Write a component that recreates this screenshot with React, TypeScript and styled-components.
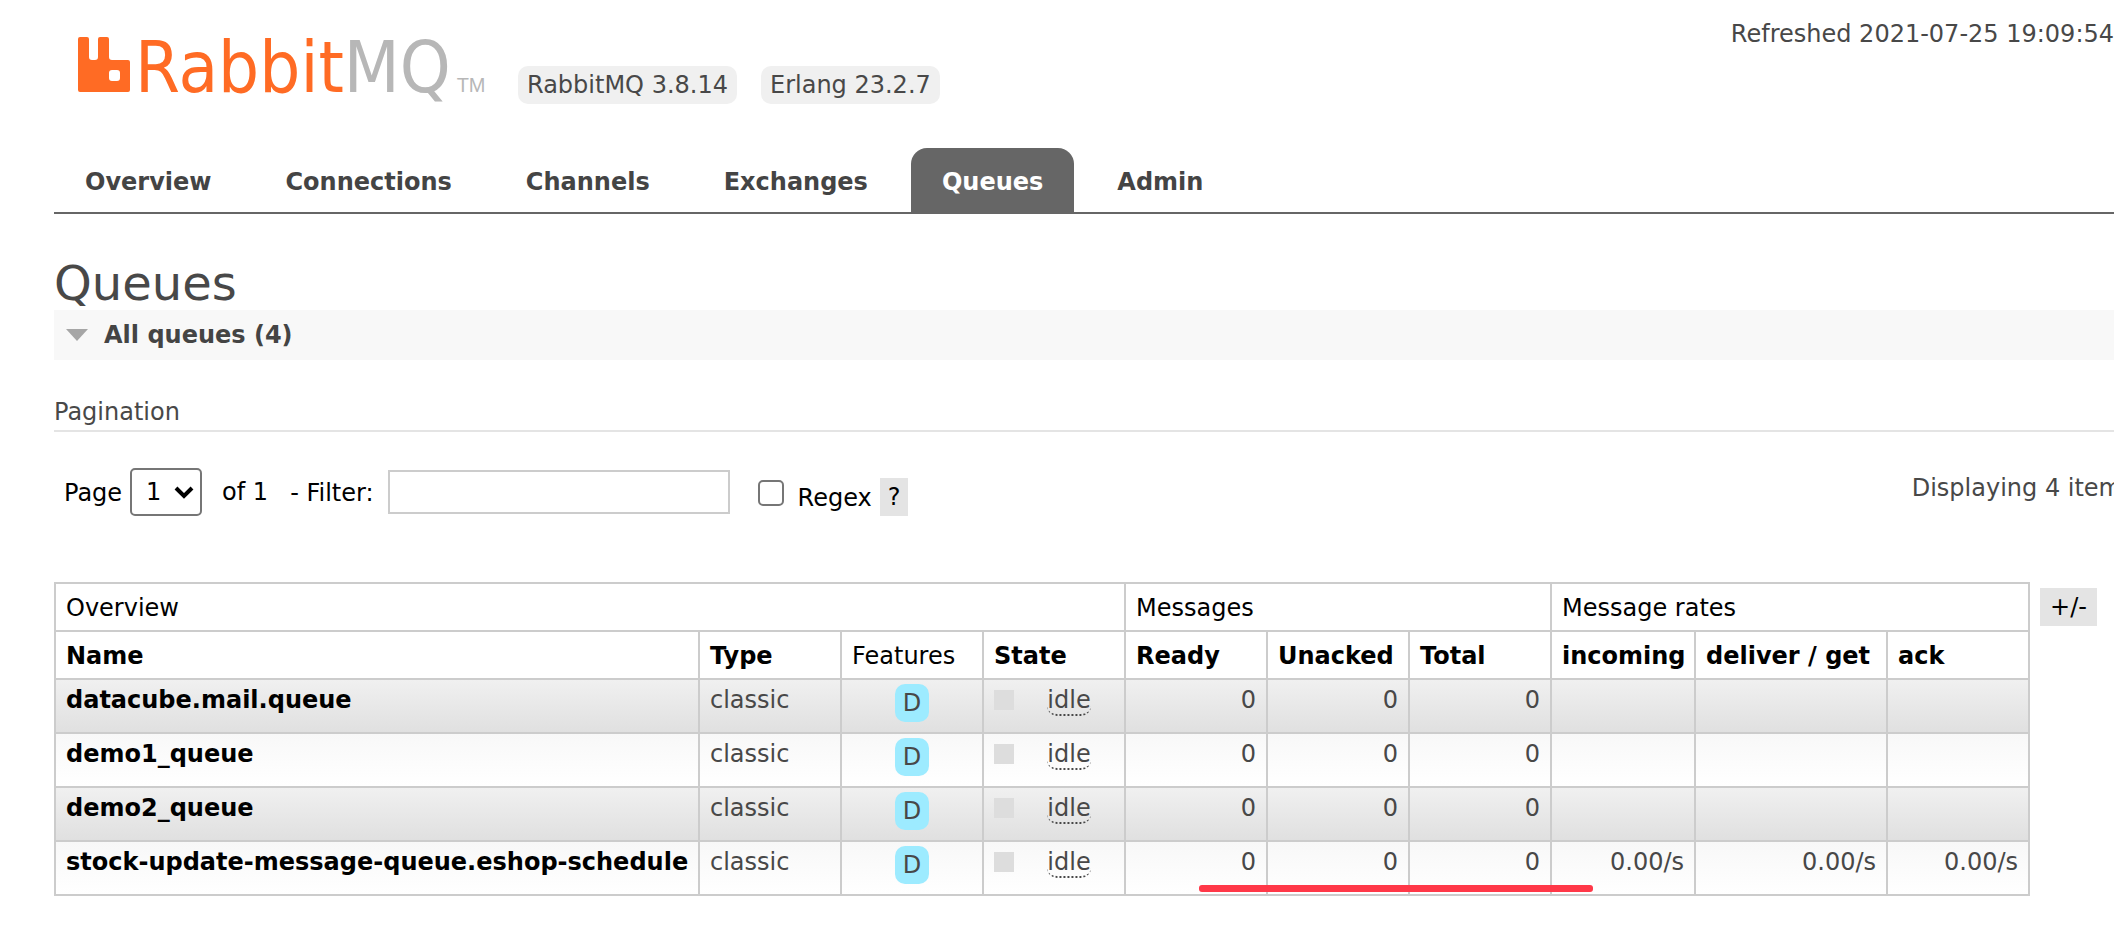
import React from "react";
import styled, { createGlobalStyle } from "styled-components";

const GlobalStyle = createGlobalStyle`
  * { box-sizing: border-box; }
  body {
    margin: 0;
    background: #fff;
    color: #484848;
    font-family: Verdana, "DejaVu Sans", sans-serif;
    font-size: 24px;
    line-height: 28px;
    overflow-x: hidden;
  }
  button, input, select { font: inherit; color: #000; }
`;

const Header = styled.header`
  display: flex;
  align-items: flex-start;
  min-height: 148px;
  padding-left: 78px;
`;

const LogoLink = styled.a`
  display: flex;
  align-items: flex-start;
  width: 440px;
  padding-top: 37px;
  text-decoration: none;
`;

const LogoMark = styled.svg`
  flex: none;
`;

const LogoText = styled.span`
  margin-left: 4px;
  font-family: "DejaVu Sans Condensed", "DejaVu Sans", sans-serif;
  font-size: 72px;
  line-height: 60px;
  color: #ff6b24;
  white-space: nowrap;
`;

const LogoGrey = styled.span`
  color: #b7b7b7;
`;

const Trademark = styled.span`
  margin-left: 6px;
  font-family: "Liberation Sans", sans-serif;
  font-size: 20px;
  color: #b7b7b7;
`;

const Versions = styled.div`
  display: flex;
  gap: 24px;
  padding-top: 66px;
`;

const Version = styled.span`
  padding: 5px 9px;
  border-radius: 10px;
  background: #f0f0f0;
  white-space: nowrap;
`;

const Refreshed = styled.div`
  margin-left: auto;
  padding-top: 20px;
  white-space: nowrap;
`;

const Main = styled.main`
  padding-left: 54px;
`;

const Tabs = styled.nav`
  display: flex;
  gap: 12px;
  margin-left: 54px;
  border-bottom: 2px solid #666;
`;

const Tab = styled.a<{ $active?: boolean }>`
  padding: 20px 31px 16px;
  border-radius: 16px 16px 0 0;
  background: ${(p) => (p.$active ? "#666" : "transparent")};
  color: ${(p) => (p.$active ? "#fff" : "#444")};
  font-weight: bold;
  text-decoration: none;
`;

const Title = styled.h1`
  margin: 42px 0 0;
  font-size: 48px;
  font-weight: normal;
  line-height: 54px;
`;

const SectionToggle = styled.button`
  display: flex;
  align-items: center;
  gap: 16px;
  width: 100%;
  height: 50px;
  padding: 0 12px;
  border: 0;
  background: #f8f8f8;
  color: #444;
  font-weight: bold;
`;

const SubHeading = styled.h3`
  margin: 38px 0 36px;
  padding-bottom: 4px;
  border-bottom: 2px solid #e4e4e4;
  font-size: 24px;
  font-weight: normal;
`;

const FilterBar = styled.form`
  display: flex;
  align-items: flex-start;
  height: 114px;
  padding-left: 10px;
  color: #000;
`;

const Field = styled.div`
  display: flex;
  align-items: center;
  height: 48px;
`;

const FieldLabel = styled.label`
  padding-top: 2px;
`;

const SelectBox = styled.div`
  position: relative;
  margin: 0 20px 0 8px;
`;

const PageSelect = styled.select`
  appearance: none;
  display: block;
  width: 72px;
  height: 48px;
  padding: 0 0 0 14px;
  border: 2px solid #767676;
  border-radius: 5px;
  background: #fff;
`;

const Chevron = styled.svg`
  position: absolute;
  right: 8px;
  top: 18px;
  pointer-events: none;
`;

const FilterLabel = styled(FieldLabel)`
  margin: 0 14px 0 22px;
`;

const FilterInput = styled.input`
  width: 342px;
  height: 44px;
  padding: 4px;
  border: 2px solid #ccc;
  background: #fff;
`;

const RegexField = styled.div`
  display: flex;
  align-items: flex-end;
  height: 48px;
  margin-left: 28px;
`;

const Checkbox = styled.input`
  appearance: none;
  width: 26px;
  height: 26px;
  margin: 0 14px 10px 0;
  border: 2px solid #767676;
  border-radius: 5px;
  background: #fff;
`;

const RegexLabel = styled.label`
  margin: 0 8px 4px 0;
`;

const GreyButton = styled.button`
  height: 38px;
  padding: 0 8px;
  border: 0;
  background: #e4e4e4;
  white-space: nowrap;
`;

const Displaying = styled.div`
  margin: 0 -8px 0 auto;
  padding-top: 6px;
  color: #484848;
  white-space: nowrap;
`;

const TableArea = styled.div`
  position: relative;
  display: flex;
  align-items: flex-start;
  gap: 10px;
  padding-bottom: 30px;
`;

const ColumnsButton = styled(GreyButton)`
  margin-top: 6px;
  padding: 0 10px;
`;

const QueueTable = styled.table`
  flex: none;
  width: 1976px;
  border-collapse: collapse;
  table-layout: fixed;
`;

const Col = styled.col<{ $w: number }>`
  width: ${(p) => p.$w}px;
`;

const HeadCell = styled.th<{ $plain?: boolean }>`
  padding: 10px 10px 8px;
  border: 2px solid #ccc;
  background: #fff;
  color: #000;
  font-weight: ${(p) => (p.$plain ? "normal" : "bold")};
  text-align: left;
  white-space: nowrap;
`;

const Row = styled.tr`
  &:nth-child(odd) td { background: linear-gradient(#f0f0f0, #e0e0e0); }
  &:nth-child(even) td { background: linear-gradient(#f8f8f8, #fff); }
`;

const Cell = styled.td<{ $align?: "left" | "center" | "right" }>`
  height: 54px;
  padding: 6px 10px 0;
  border: 2px solid #ccc;
  text-align: ${(p) => p.$align ?? "left"};
  vertical-align: top;
  white-space: nowrap;
`;

const FeatureCell = styled(Cell)`
  padding-top: 4px;
`;

const QueueLink = styled.a`
  color: #000;
  font-weight: bold;
  text-decoration: none;
`;

const Feature = styled.span`
  display: inline-block;
  padding: 5px 8px;
  border-radius: 10px;
  background: #9debff;
  vertical-align: top;
`;

const StateBox = styled.div`
  display: flex;
  gap: 10px;
`;

const StateKey = styled.span`
  width: 20px;
  height: 20px;
  margin-top: 4px;
  background: #ddd;
`;

const StateText = styled.span`
  flex: 1;
  text-align: center;
`;

const Abbr = styled.abbr`
  display: inline-block;
  border-bottom: 2px dotted #484848;
  border-radius: 10px;
  text-decoration: none;
`;

const RedLine = styled.div`
  position: absolute;
  left: 1145px;
  top: 303px;
  width: 394px;
  height: 7px;
  border-radius: 3px;
  background: #ff3848;
`;

const tabs = ["Overview", "Connections", "Channels", "Exchanges", "Queues", "Admin"];
const columns = [644, 142, 142, 142, 142, 142, 142, 144, 192, 142];
const heads = ["Name", "Type", "Features", "State", "Ready", "Unacked", "Total", "incoming", "deliver / get", "ack"];
const queues = [
  { name: "datacube.mail.queue", rate: "" },
  { name: "demo1_queue", rate: "" },
  { name: "demo2_queue", rate: "" },
  { name: "stock-update-message-queue.eshop-schedule", rate: "0.00/s" },
];

export default function App() {
  return (
    <>
      <GlobalStyle />
      <Header>
        <LogoLink href="#" aria-label="RabbitMQ">
          <LogoMark width="53" height="56" viewBox="0 0 53 56" fill="#ff6b24">
            <path
              fillRule="evenodd"
              d="M2 0H9Q11 0 11 2V20Q11 23 14 23H17Q20 23 20 20V2Q20 0 22 0H29Q31 0 31 2V20Q31 23 34 23H50Q52 23 52 25V53Q52 55 50 55H2Q0 55 0 53V2Q0 0 2 0ZM34 33Q31 33 31 36V41Q31 44 34 44H39Q42 44 42 41V36Q42 33 39 33Z"
            />
          </LogoMark>
          <LogoText>
            Rabbit<LogoGrey>MQ</LogoGrey>
            <Trademark>TM</Trademark>
          </LogoText>
        </LogoLink>
        <Versions>
          <Version>RabbitMQ 3.8.14</Version>
          <Version>Erlang 23.2.7</Version>
        </Versions>
        <Refreshed>Refreshed 2021-07-25 19:09:54</Refreshed>
      </Header>
      <Tabs>
        {tabs.map((t) => (
          <Tab key={t} href="#" $active={t === "Queues"}>
            {t}
          </Tab>
        ))}
      </Tabs>
      <Main>
        <Title>Queues</Title>
        <SectionToggle type="button">
          <svg width="22" height="14" viewBox="0 0 22 14" fill="#a6a6a6">
            <path d="M0 1H22L11 13Z" />
          </svg>
          All queues (4)
        </SectionToggle>
        <SubHeading>Pagination</SubHeading>
        <FilterBar>
          <Field>
            <FieldLabel htmlFor="page">Page</FieldLabel>
            <SelectBox>
              <PageSelect id="page" defaultValue="1">
                <option value="1">1</option>
              </PageSelect>
              <Chevron width="20" height="14" viewBox="0 0 20 14" fill="none" stroke="#000" strokeWidth="4">
                <path d="M2 2L10 10L18 2" />
              </Chevron>
            </SelectBox>
            <span>of 1</span>
            <FilterLabel htmlFor="filter">- Filter:</FilterLabel>
            <FilterInput id="filter" type="text" />
          </Field>
          <RegexField>
            <Checkbox id="regex" type="checkbox" />
            <RegexLabel htmlFor="regex">Regex</RegexLabel>
            <GreyButton type="button">?</GreyButton>
          </RegexField>
          <Displaying>Displaying 4 item</Displaying>
        </FilterBar>
        <TableArea>
          <QueueTable>
            <colgroup>
              {columns.map((w, i) => (
                <Col key={i} $w={w} />
              ))}
            </colgroup>
            <thead>
              <tr>
                <HeadCell $plain colSpan={4}>Overview</HeadCell>
                <HeadCell $plain colSpan={3}>Messages</HeadCell>
                <HeadCell $plain colSpan={3}>Message rates</HeadCell>
              </tr>
              <tr>
                {heads.map((h) => (
                  <HeadCell key={h} $plain={h === "Features"}>
                    {h}
                  </HeadCell>
                ))}
              </tr>
            </thead>
            <tbody>
              {queues.map((q) => (
                <Row key={q.name}>
                  <Cell>
                    <QueueLink href="#">{q.name}</QueueLink>
                  </Cell>
                  <Cell>classic</Cell>
                  <FeatureCell $align="center">
                    <Feature>D</Feature>
                  </FeatureCell>
                  <Cell>
                    <StateBox>
                      <StateKey />
                      <StateText>
                        <Abbr>idle</Abbr>
                      </StateText>
                    </StateBox>
                  </Cell>
                  <Cell $align="right">0</Cell>
                  <Cell $align="right">0</Cell>
                  <Cell $align="right">0</Cell>
                  <Cell $align="right">{q.rate}</Cell>
                  <Cell $align="right">{q.rate}</Cell>
                  <Cell $align="right">{q.rate}</Cell>
                </Row>
              ))}
            </tbody>
          </QueueTable>
          <ColumnsButton type="button">+/-</ColumnsButton>
          <RedLine />
        </TableArea>
      </Main>
    </>
  );
}
